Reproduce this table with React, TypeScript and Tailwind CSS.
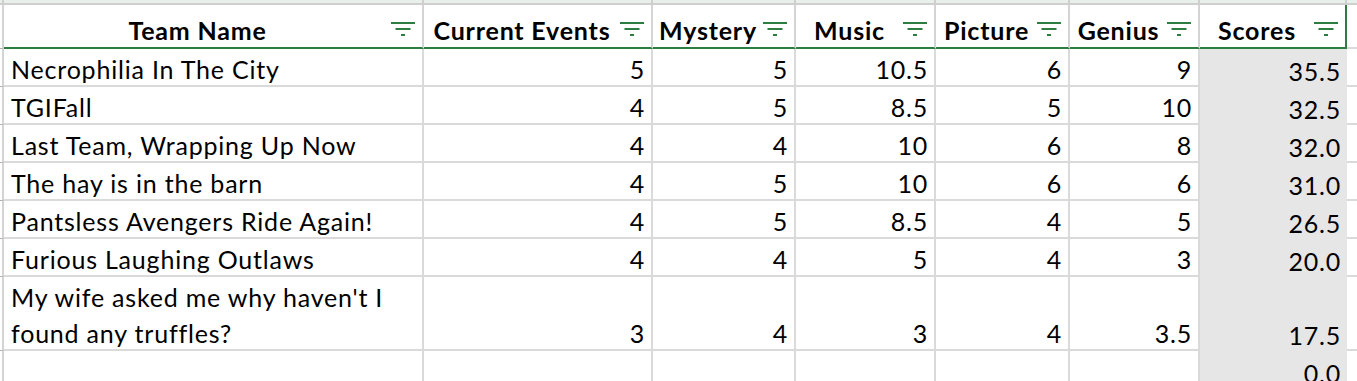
const colW = ["w-[420px]", "w-[229px]", "w-[143px]", "w-[140px]", "w-[134px]", "w-[130px]", "w-[147px]"];

const headers = ["Team Name", "Current Events", "Mystery", "Music", "Picture", "Genius", "Scores"];

type Row = { name: string; vals: (number | string)[]; score: string; tall?: boolean };

const rows: Row[] = [
  { name: "Necrophilia In The City", vals: [5, 5, 10.5, 6, 9], score: "35.5" },
  { name: "TGIFall", vals: [4, 5, 8.5, 5, 10], score: "32.5" },
  { name: "Last Team, Wrapping Up Now", vals: [4, 4, 10, 6, 8], score: "32.0" },
  { name: "The hay is in the barn", vals: [4, 5, 10, 6, 6], score: "31.0" },
  { name: "Pantsless Avengers Ride Again!", vals: [4, 5, 8.5, 4, 5], score: "26.5" },
  { name: "Furious Laughing Outlaws", vals: [4, 4, 5, 4, 3], score: "20.0" },
  { name: "My wife asked me why haven't I\nfound any truffles?", vals: [3, 4, 3, 4, 3.5], score: "17.5", tall: true },
  { name: "", vals: ["", "", "", "", ""], score: "0.0" },
];

// little excel style filter button
const FilterIcon = () => (
  <svg width="24" height="16" viewBox="0 0 24 16" className="shrink-0 mb-[10px] mr-[7px]">
    <rect x="0" y="1" width="24" height="2" fill="#2e7d40" />
    <rect x="4.5" y="7" width="15" height="2" fill="#2e7d40" />
    <rect x="10" y="13" width="4" height="2" fill="#2e7d40" />
  </svg>
);

const App = () => {
  return (
    <div className="w-[1357px] h-[381px] overflow-hidden bg-white font-[Lato,sans-serif] text-black">
      {/* strip above the table */}
      <div className="flex h-[5px]">
        <div className="w-[4px] shrink-0 bg-[#e9efe9] border-r-2 border-b-2 border-[#cfcfcf]" />
        {colW.map((w, i) => (
          <div key={i} className={`${w} shrink-0 bg-[#e9efe9] border-r-2 border-b-2 border-[#cfcfcf]`} />
        ))}
        <div className="flex-1 bg-[#e9efe9] border-b-2 border-[#cfcfcf]" />
      </div>

      {/* header */}
      <div className="flex h-[44px]">
        <div className="w-[4px] shrink-0 border-r-2 border-[#d4d4d4] border-b border-b-[#b0b0b0]" />
        {headers.map((h, i) => (
          <div
            key={h}
            className={`${colW[i]} shrink-0 flex items-end border-b-2 border-b-[#2e7d40] ${
              i === 6 ? "border-r-2 border-r-[#2e7d40]" : "border-r-2 border-r-[#d4d4d4]"
            }`}
          >
            <span className="flex-1 text-center whitespace-nowrap text-[25px] tracking-[0.8px] font-bold leading-[30px] pb-[2px]">
              {h}
            </span>
            <FilterIcon />
          </div>
        ))}
        <div className="flex-1 border-b-2 border-[#dadada]" />
      </div>

      {/* body */}
      {rows.map((r, ri) => (
        <div key={ri} className={`flex ${r.tall ? "h-[74px]" : "h-[38px]"}`}>
          <div className="w-[4px] shrink-0 border-r-2 border-[#d4d4d4] border-b border-b-[#b0b0b0]" />
          <div className={`${colW[0]} shrink-0 flex items-end border-r-2 border-b-2 border-[#dadada] pl-[7px]`}>
            <span className="whitespace-pre-line text-[25px] tracking-[0.8px] leading-[36px] -mb-[2px]">{r.name}</span>
          </div>
          {r.vals.map((v, vi) => (
            <div
              key={vi}
              className={`${colW[vi + 1]} shrink-0 flex items-end justify-end border-r-2 border-b-2 border-[#dadada] pr-[6px]`}
            >
              <span className="text-[25px] tracking-[0.8px] leading-[36px] -mb-[2px]">{v}</span>
            </div>
          ))}
          <div className={`${colW[6]} shrink-0 flex items-end justify-end bg-[#e7e6e6] pr-[6px]`}>
            <span className="text-[25px] tracking-[0.8px] leading-[36px] -mb-[2px]">{r.score}</span>
          </div>
          <div className="flex-1 border-b-2 border-[#dadada]" />
        </div>
      ))}
    </div>
  );
};

export default App;
